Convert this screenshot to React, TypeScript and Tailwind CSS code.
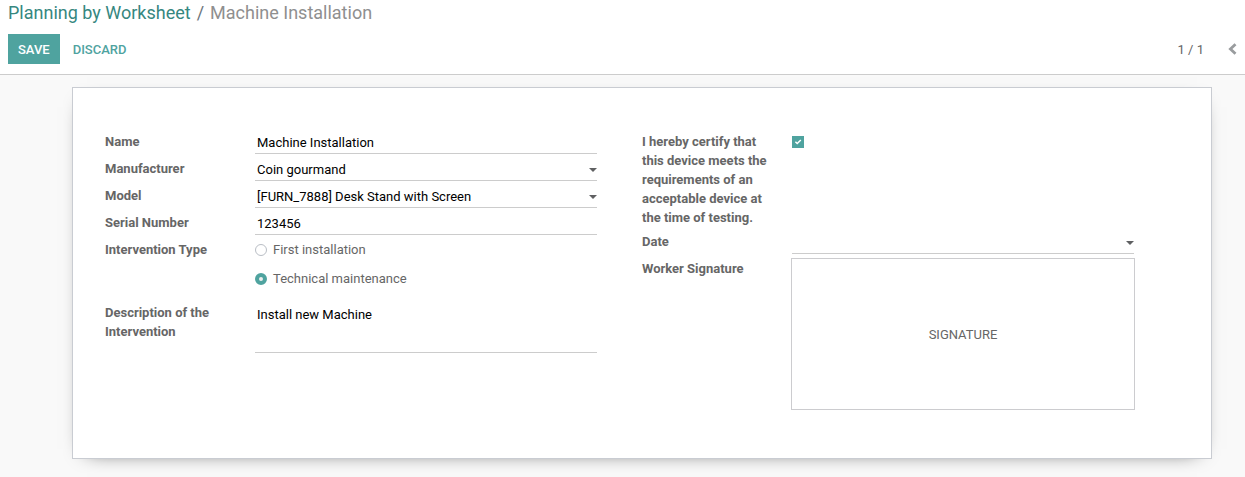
import { useState } from 'react'
import type { ReactNode } from 'react'
import clsx from 'clsx'

const manufacturers = ['Coin gourmand', 'Azure Interior', 'Deco Addict']
const models = ['[FURN_7888] Desk Stand with Screen', '[FURN_0096] Customizable Desk']
const interventionTypes = ['First installation', 'Technical maintenance']

const defaultForm = {
  name: 'Machine Installation',
  manufacturer: manufacturers[0],
  model: models[0],
  serial: '123456',
  intervention: interventionTypes[1],
  description: 'Install new Machine',
  certified: true,
  date: '',
}

const fieldClass =
  'block w-full h-[23px] px-0.5 border-b border-[#cccccc] bg-transparent text-black appearance-none rounded-none focus:outline-none focus:border-[#4fa39f]'

const labelClass = 'pr-4 pt-px font-bold leading-[19px] text-[#666666]'

function Caret() {
  return (
    <svg viewBox="0 0 8 4" className="absolute right-0 top-[10px] w-2 h-1 pointer-events-none" aria-hidden="true">
      <path d="M0 0h8L4 4z" fill="#5f6062" />
    </svg>
  )
}

function Row({ label, htmlFor, children }: { label: string; htmlFor: string; children: ReactNode }) {
  return (
    <div className="grid grid-cols-[150px_1fr] pb-1">
      <label htmlFor={htmlFor} className={labelClass}>{label}</label>
      <div className="relative">{children}</div>
    </div>
  )
}

export default function App() {
  const [form, setForm] = useState(defaultForm)

  const update = (values: Partial<typeof defaultForm>) => setForm(f => ({ ...f, ...values }))

  return (
    <div className="min-h-screen flex flex-col bg-[#f9f9f9] font-[Roboto,sans-serif] text-[13px] text-[#666666]">
      {/* Control panel */}
      <header className="bg-white border-b border-[#cccccc] px-2 pb-[10px]">
        <nav aria-label="Breadcrumb" className="text-lg leading-[26px]">
          <ol className="flex">
            <li>
              <a href="#worksheets" className="text-[#36877f] hover:underline">Planning by Worksheet</a>
            </li>
            <li aria-hidden="true" className="px-1.5 text-[#6c757d]">/</li>
            <li aria-current="page" className="text-[#8f8f8f]">Machine Installation</li>
          </ol>
        </nav>
        <div className="flex items-center justify-between mt-2">
          <div className="flex items-center gap-[3px]">
            <button type="button" className="h-[30px] px-[10px] pt-0.5 bg-[#4fa39f] text-white font-medium uppercase">
              Save
            </button>
            <button
              type="button"
              onClick={() => setForm(defaultForm)}
              className="h-[30px] px-[10px] pt-0.5 text-[#4fa39f] font-medium uppercase"
            >
              Discard
            </button>
          </div>
          <div className="flex items-center gap-6">
            <span className="pt-0.5">1 / 1</span>
            <button type="button" aria-label="Previous">
              <svg viewBox="0 0 9 12" className="w-[9px] h-3" aria-hidden="true">
                <path d="M7.5 1.2L2.4 6l5.1 4.8" fill="none" stroke="#999c9e" strokeWidth="2.8" />
              </svg>
            </button>
          </div>
        </div>
      </header>

      {/* Sheet */}
      <main className="pt-3 pl-[72px] pr-[33px] pb-[18px]">
        <form
          onSubmit={e => e.preventDefault()}
          className="grid grid-cols-2 gap-x-[45px] pt-[43px] pb-11 pl-8 pr-[77px] bg-white border border-[#c9ccd2] shadow-[0_5px_20px_-15px_black]"
        >
          <div>
            <Row label="Name" htmlFor="name">
              <input
                id="name"
                type="text"
                value={form.name}
                onChange={e => update({ name: e.target.value })}
                className={fieldClass}
              />
            </Row>
            <Row label="Manufacturer" htmlFor="manufacturer">
              <select
                id="manufacturer"
                value={form.manufacturer}
                onChange={e => update({ manufacturer: e.target.value })}
                className={clsx(fieldClass, 'pt-0.5')}
              >
                {manufacturers.map(m => <option key={m}>{m}</option>)}
              </select>
              <Caret />
            </Row>
            <Row label="Model" htmlFor="model">
              <select
                id="model"
                value={form.model}
                onChange={e => update({ model: e.target.value })}
                className={clsx(fieldClass, 'pt-0.5')}
              >
                {models.map(m => <option key={m}>{m}</option>)}
              </select>
              <Caret />
            </Row>
            <Row label="Serial Number" htmlFor="serial">
              <input
                id="serial"
                type="text"
                value={form.serial}
                onChange={e => update({ serial: e.target.value })}
                className={fieldClass}
              />
            </Row>

            <div
              role="radiogroup"
              aria-labelledby="intervention-label"
              className="grid grid-cols-[150px_1fr] pb-[14px]"
            >
              <span id="intervention-label" className={labelClass}>Intervention Type</span>
              <div className="flex flex-col gap-[10px] pt-px">
                {interventionTypes.map(type => (
                  <label key={type} className="flex items-center gap-[6px] leading-[19px]">
                    <input
                      type="radio"
                      name="intervention"
                      checked={form.intervention === type}
                      onChange={() => update({ intervention: type })}
                      className={clsx(
                        'appearance-none w-3 h-3 rounded-full',
                        form.intervention === type
                          ? 'border-4 border-[#4fa39f] bg-[#eeeeee]'
                          : 'border border-[#b9bec5] bg-white'
                      )}
                    />
                    {type}
                  </label>
                ))}
              </div>
            </div>

            <Row label="Description of the Intervention" htmlFor="description">
              <textarea
                id="description"
                value={form.description}
                onChange={e => update({ description: e.target.value })}
                className="block w-full h-[51px] px-0.5 pt-[3px] leading-[19px] border-b border-[#cccccc] text-black resize-none focus:outline-none focus:border-[#4fa39f]"
              />
            </Row>
          </div>

          <div>
            <Row
              label="I hereby certify that this device meets the requirements of an acceptable device at the time of testing."
              htmlFor="certified"
            >
              <span className="relative block w-3 h-3 mt-[5px]">
                <input
                  id="certified"
                  type="checkbox"
                  checked={form.certified}
                  onChange={e => update({ certified: e.target.checked })}
                  className="block appearance-none w-3 h-3 border border-[#4fa39f] checked:bg-[#4fa39f]"
                />
                {form.certified && (
                  <svg viewBox="0 0 12 12" className="absolute inset-0 w-3 h-3 pointer-events-none" aria-hidden="true">
                    <path d="M3.4 5.8l1.8 1.7L8.8 4" fill="none" stroke="white" strokeWidth="1.5" />
                  </svg>
                )}
              </span>
            </Row>
            <Row label="Date" htmlFor="date">
              <input
                id="date"
                type="text"
                value={form.date}
                onChange={e => update({ date: e.target.value })}
                className={fieldClass}
              />
              <Caret />
            </Row>
            <Row label="Worker Signature" htmlFor="signature">
              <div className="-mx-px">
                <button
                  id="signature"
                  type="button"
                  className="block w-full h-[152px] pt-0.5 border border-[#cccccf] uppercase"
                >
                  Signature
                </button>
              </div>
            </Row>
          </div>
        </form>
      </main>
    </div>
  )
}
